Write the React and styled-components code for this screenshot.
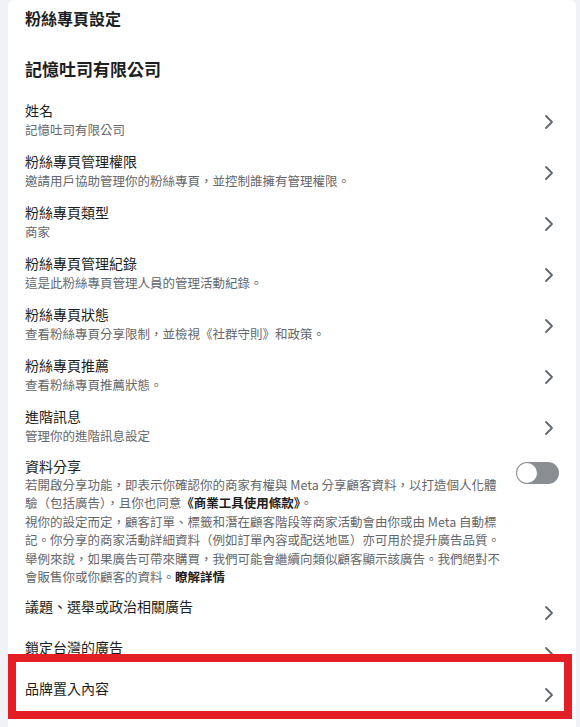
import React from "react";
import styled, { createGlobalStyle } from "styled-components";

const GlobalStyle = createGlobalStyle`
  html, body {
    margin: 0;
    padding: 0;
    background: #f0f2f5;
    font-family: "Noto Sans CJK TC", "Noto Sans", "Liberation Sans", sans-serif;
    color: #1c1e21;
  }
`;

const Page = styled.div`
  padding: 0 4px 0 8px;
`;

const Card = styled.section`
  background: #ffffff;
  border-radius: 6px 6px 0 0;
  padding: 8px 17px 20px;
`;

const PageTitle = styled.h1`
  margin: 0;
  font-size: 16px;
  line-height: 20px;
  font-weight: 700;
  color: #1c1e21;
`;

const PageName = styled.h2`
  margin: 29px 0 13px;
  font-size: 17px;
  line-height: 24px;
  font-weight: 700;
  color: #1c1e21;
`;

const List = styled.div`
  display: flex;
  flex-direction: column;
`;

const Row = styled.div`
  position: relative;
  display: flex;
  align-items: ${(p) => (p.$top ? "flex-start" : "center")};
  gap: 12px;
  box-sizing: border-box;
  padding: ${(p) => p.$pad || "6px 0 6px"};
  min-height: ${(p) => p.$h || "auto"};
  cursor: pointer;

  ${(p) =>
    p.$highlight &&
    `
    &::after {
      content: "";
      position: absolute;
      top: -20px;
      bottom: -4px;
      left: -17px;
      right: -13px;
      border: 8px solid #e31e24;
      pointer-events: none;
    }
  `}
`;

const TextBlock = styled.div`
  flex: 1;
  min-width: 0;
  align-self: flex-start;
`;

const Title = styled.div`
  font-size: 14px;
  line-height: 20px;
  color: #1c1e21;
`;

const Sub = styled.div`
  margin-top: 1px;
  font-size: 12.5px;
  line-height: 18px;
  color: #65676b;
`;

const Para = styled.p`
  margin: ${(p) => (p.$first ? "0" : "1px")} 0 0;
  font-size: 12.5px;
  line-height: 18px;
  color: #65676b;
  white-space: nowrap;
`;

const Strong = styled.b`
  font-weight: 700;
  color: #1c1e21;
`;

const ChevronBox = styled.span`
  flex: none;
  width: 20px;
  height: 20px;
  display: flex;
  align-items: center;
  justify-content: center;
  margin-top: ${(p) => p.$dy || 0}px;
  color: #606770;
`;

const Toggle = styled.span`
  flex: none;
  align-self: flex-start;
  margin-top: 6px;
  width: 43px;
  height: 22px;
  box-sizing: border-box;
  padding: 1px;
  border-radius: 11px;
  background: #8a8d91;
  display: flex;
  align-items: center;
`;

const Knob = styled.span`
  width: 20px;
  height: 20px;
  border-radius: 50%;
  background: #ffffff;
`;

const Chevron = ({ dy }) => (
  <ChevronBox $dy={dy}>
    <svg width="10" height="16" viewBox="0 0 10 16" fill="none">
      <path
        d="M2 2 L8 8 L2 14"
        stroke="currentColor"
        strokeWidth="1.8"
        strokeLinecap="round"
        strokeLinejoin="round"
      />
    </svg>
  </ChevronBox>
);

const items = [
  ["姓名", "記憶吐司有限公司"],
  ["粉絲專頁管理權限", "邀請用戶協助管理你的粉絲專頁，並控制誰擁有管理權限。"],
  ["粉絲專頁類型", "商家"],
  ["粉絲專頁管理紀錄", "這是此粉絲專頁管理人員的管理活動紀錄。"],
  ["粉絲專頁狀態", "查看粉絲專頁分享限制，並檢視《社群守則》和政策。"],
  ["粉絲專頁推薦", "查看粉絲專頁推薦狀態。"],
  ["進階訊息", "管理你的進階訊息設定"],
];

const simple = ["議題、選舉或政治相關廣告", "鎖定台灣的廣告", "品牌置入內容"];

export default function App() {
  return (
    <>
      <GlobalStyle />
      <Page>
        <Card>
          <PageTitle>粉絲專頁設定</PageTitle>
          <PageName>記憶吐司有限公司</PageName>
          <List>
            {items.map(([t, s]) => (
              <Row key={t}>
                <TextBlock>
                  <Title>{t}</Title>
                  <Sub>{s}</Sub>
                </TextBlock>
                <Chevron dy={5} />
              </Row>
            ))}
            <Row $top $pad="5px 0 6px">
              <TextBlock>
                <Title>資料分享</Title>
                <Para $first>
                  若開啟分享功能，即表示你確認你的商家有權與 Meta 分享顧客資料，以打造個人化體
                  <br />
                  驗（包括廣告），且你也同意<Strong>《商業工具使用條款》</Strong>。
                </Para>
                <Para>
                  視你的設定而定，顧客訂單、標籤和潛在顧客階段等商家活動會由你或由 Meta 自動標
                  <br />
                  記。你分享的商家活動詳細資料（例如訂單內容或配送地區）亦可用於提升廣告品質。
                </Para>
                <Para>
                  舉例來說，如果廣告可帶來購買，我們可能會繼續向類似顧客顯示該廣告。我們絕對不
                  <br />
                  會販售你或你顧客的資料。<Strong>瞭解詳情</Strong>
                </Para>
              </TextBlock>
              <Toggle>
                <Knob />
              </Toggle>
            </Row>
            {simple.map((t, i) => (
              <Row key={t} $pad="4px 0 0" $h="41px" $highlight={i === simple.length - 1}>
                <TextBlock>
                  <Title>{t}</Title>
                </TextBlock>
                <Chevron dy={-4} />
              </Row>
            ))}
          </List>
        </Card>
      </Page>
    </>
  );
}
